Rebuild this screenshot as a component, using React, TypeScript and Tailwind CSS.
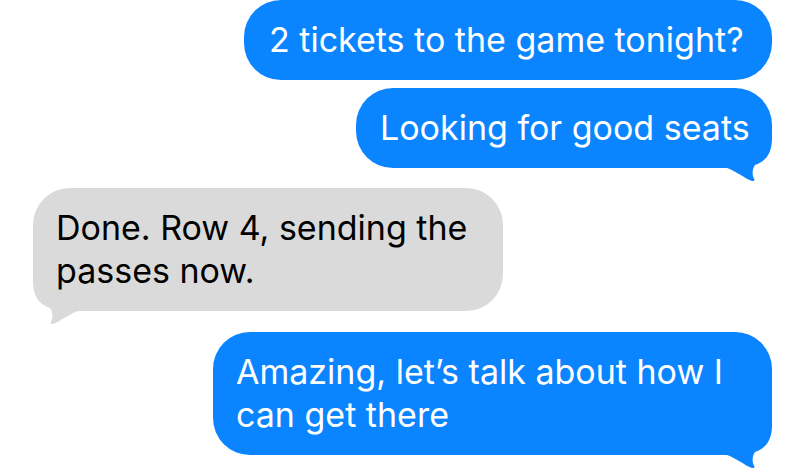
import React from "react";

const BLUE = "#0a84ff";

function Tail({ color, left }: { color: string; left?: boolean }) {
  return (
    <svg
      width="50"
      height="51"
      viewBox="0 0 50 51"
      className={left ? "absolute left-0 bottom-[-14px] -scale-x-100" : "absolute right-0 bottom-[-14px]"}
    >
      <path
        d="M50 0 L50 7 C50 21 45 30 33 34 C30 38 30 44 32 47.5 Q33.5 50.5 30 50 C22 47 14 40 5 37 L0 37 L0 0 Z"
        fill={color}
      />
    </svg>
  );
}

function Bubble({
  text,
  width,
  me,
  tail,
  pad,
}: {
  text: string;
  width: string;
  me: boolean;
  tail: boolean;
  pad: string;
}) {
  const color = me ? BLUE : "#dadada";
  return (
    <div
      className={`relative rounded-[37px] pr-[12px] pt-[18px] pb-[19px] text-[34px] leading-[43px] ${pad} ${width} ${
        me ? "bg-[#0a84ff] text-white" : "bg-[#dadada] text-black"
      }`}
    >
      {tail && <Tail color={color} left={!me} />}
      <span className="relative">{text}</span>
    </div>
  );
}

export default function App() {
  return (
    <div
      className="w-[804px] h-[470px] overflow-hidden bg-white flex flex-col pl-[33px] pr-[32px]"
      style={{ fontFamily: "Inter, 'Noto Sans', sans-serif" }}
    >
      <div className="self-end">
        <Bubble me tail={false} pad="pl-[25px]" width="w-[528px]" text="2 tickets to the game tonight?" />
      </div>
      <div className="self-end mt-[8px]">
        <Bubble me tail pad="pl-[24px]" width="w-[416px]" text="Looking for good seats" />
      </div>
      <div className="self-start mt-[20px]">
        <Bubble me={false} tail pad="pl-[23px]" width="w-[470px]" text="Done. Row 4, sending the passes now." />
      </div>
      <div className="self-end mt-[21px]">
        <Bubble me tail pad="pl-[23px]" width="w-[559px]" text="Amazing, let’s talk about how I can get there" />
      </div>
    </div>
  );
}
